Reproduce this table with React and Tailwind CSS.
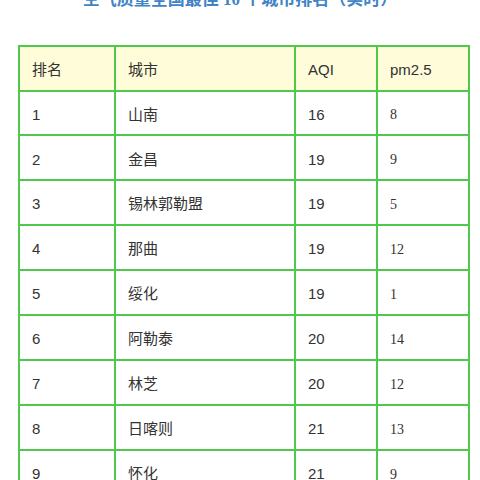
const rows = [
  { rank: 1, city: '山南', aqi: 16, pm: 8 },
  { rank: 2, city: '金昌', aqi: 19, pm: 9 },
  { rank: 3, city: '锡林郭勒盟', aqi: 19, pm: 5 },
  { rank: 4, city: '那曲', aqi: 19, pm: 12 },
  { rank: 5, city: '绥化', aqi: 19, pm: 1 },
  { rank: 6, city: '阿勒泰', aqi: 20, pm: 14 },
  { rank: 7, city: '林芝', aqi: 20, pm: 12 },
  { rank: 8, city: '日喀则', aqi: 21, pm: 13 },
  { rank: 9, city: '怀化', aqi: 21, pm: 9 },
  { rank: 10, city: '景洪', aqi: 22, pm: 10 },
]

const cell = 'border-r-2 border-b-2 border-[#4fc94c] pl-3 pt-[4px] flex items-center'

export default function App() {
  return (
    <div
      className="w-[480px] h-[480px] overflow-hidden bg-white px-[18px] text-[#333]"
      style={{ fontFamily: '"Liberation Sans", "Noto Sans CJK SC", sans-serif' }}
    >
      {/* 标题 */}
      <h1 className="-mt-[12px] text-center text-[17px] leading-[24px] font-bold text-[#3f84c5]">
        空气质量全国最佳
        <span className="font-['Liberation_Serif',serif]"> 10 </span>
        个城市排名（实时）
      </h1>

      {/* 排名表 */}
      <div className="mt-[33px] w-[452px] grid grid-cols-[96px_180px_82px_92px] border-l-2 border-t-2 border-[#4fc94c] text-[15px]">
        <div className={`${cell} h-[44.5px] bg-[#fefcd9]`}>排名</div>
        <div className={`${cell} h-[44.5px] bg-[#fefcd9]`}>城市</div>
        <div className={`${cell} h-[44.5px] bg-[#fefcd9]`}>AQI</div>
        <div className={`${cell} h-[44.5px] bg-[#fefcd9]`}>pm2.5</div>
        {rows.map((r) => (
          <div key={r.rank} className="contents">
            <div className={`${cell} h-[44.9px]`}>{r.rank}</div>
            <div className={`${cell} h-[44.9px]`}>{r.city}</div>
            <div className={`${cell} h-[44.9px]`}>{r.aqi}</div>
            <div className={`${cell} h-[44.9px] font-['Liberation_Serif',serif] text-[14px]`}>{r.pm}</div>
          </div>
        ))}
      </div>
    </div>
  )
}
